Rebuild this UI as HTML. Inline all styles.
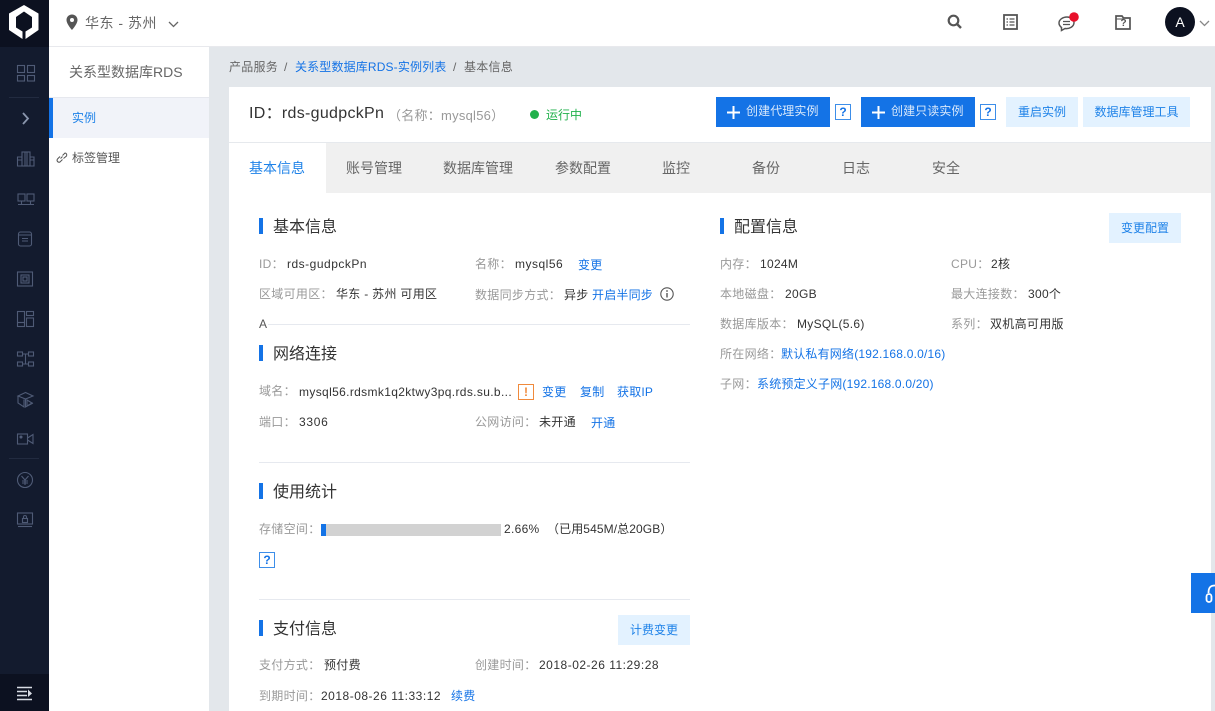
<!DOCTYPE html>
<html lang="zh"><head><meta charset="utf-8"><title>RDS</title>
<style>
html,body{margin:0;padding:0;width:1215px;height:711px;overflow:hidden;background:#e3e7eb;font-family:"Liberation Sans","Noto Sans CJK SC",sans-serif;font-size:12px;color:#333}
.a,.t,.l,.v,.k,.h,.b{position:absolute;white-space:nowrap}
.t{line-height:20px}
.l{color:#999;line-height:20px;font-size:12px;letter-spacing:.3px}
.v{color:#333;line-height:20px;font-size:12px;letter-spacing:.3px}
.n{letter-spacing:.5px}
.k{color:#1473e6;line-height:20px;font-size:12px;letter-spacing:.2px}
.h{font-size:16px;line-height:22px;color:#333}
.h:before{content:"";position:absolute;left:-14px;top:1px;width:4px;height:16px;background:#1473e6}
.b{background:#e3f2ff;color:#1e82e8;text-align:center;height:30px;line-height:30px;font-size:12px}
.p{background:#1473e6;color:#d8e8fb;height:30px;line-height:29px;top:97px;font-size:12px;letter-spacing:.1px}
.p svg{position:absolute;left:11px;top:9px}
.p span{position:absolute;left:30px}
.q{position:absolute;width:14px;height:14px;border:1px solid #3d8ee9;background:#fff;color:#1473e6;text-align:center;line-height:14px;font-size:12px;font-weight:bold}
.tab{position:absolute;top:158px;font-size:14px;line-height:20px;color:#666}
.hr{position:absolute;height:1px;background:#e6e9ef}
svg{position:absolute;overflow:visible}
.ic{fill:none;stroke:#4f5b76;stroke-width:1.1}
</style></head><body>
<!-- sidebar -->
<div class="a" style="left:0;top:0;width:49px;height:711px;background:#131b2e"></div>
<div class="a" style="left:0;top:0;width:49px;height:47px;background:#0c1120"></div>
<div class="a" style="left:0;top:674px;width:49px;height:37px;background:#0c1120"></div>
<div class="a" style="left:9px;top:97px;width:30px;height:1px;background:#222b40"></div>
<div class="a" style="left:9px;top:458px;width:30px;height:1px;background:#222b40"></div>
<svg style="left:0;top:0" width="49" height="47"><path d="M24 5L38.500 13.500V30L25.500 39V31.500L32 27.500V17L24 11.500L16 17V27.500L22.500 31.500V39L9 30V13.500Z" fill="#fff"/></svg>
<svg class="ic" style="left:0;top:0" width="49" height="540">
<g><rect x="17.500" y="65.500" width="7" height="7"/><rect x="27.500" y="65.500" width="7" height="7"/><rect x="17.500" y="75.500" width="7" height="5.500"/><rect x="27.500" y="75.500" width="7" height="5.500"/></g>
<path d="M23 113L28 118.500L23 124" stroke="#8a96ad" stroke-width="1.800"/>
<g><rect x="22" y="152" width="8" height="14"/><path d="M22 157H17.500V166H34V157H30M25 152V166M27 152V166M17.500 160H22M30 160H34"/></g>
<g><rect x="18" y="194" width="7" height="7"/><rect x="27" y="194" width="7" height="7"/><path d="M18 204.500H34M21.500 201V204.500M30.500 201V204.500"/></g>
<g><rect x="18.500" y="232" width="13" height="14" rx="2"/><path d="M18.500 235H31.500M22 238.500H28M22 241H28"/></g>
<g><rect x="17.500" y="272" width="15" height="14"/><rect x="21" y="275" width="8" height="8"/><rect x="23" y="277" width="4" height="4"/></g>
<g><rect x="17.500" y="311.500" width="7" height="11"/><rect x="26.500" y="311.500" width="7" height="4"/><rect x="17.500" y="322.500" width="7" height="4"/><rect x="26.500" y="318" width="7" height="8.500"/></g>
<g><rect x="17.500" y="352" width="5" height="4"/><rect x="28.500" y="352" width="5" height="4"/><rect x="17.500" y="362" width="5" height="4"/><rect x="28.500" y="362" width="5" height="4"/><path d="M22.500 354H28.500M22.500 364H28.500M25.500 354V364"/></g>
<g><path d="M18 396L25.500 392.500L33 396L25.500 399ZM18 396V403L24 407V399.500M25.500 399V407L33 403M27 400V406L32 403Z"/></g>
<g><rect x="17.500" y="434" width="10" height="10"/><path d="M27.500 438L33 434.500V443.500L27.500 440"/><circle cx="21" cy="437" r="1" fill="#5c6a85"/></g>
<g><circle cx="25" cy="480" r="7.500"/><path d="M21.500 476L25 480L28.500 476M25 480V485M22 481H28M22 483H28"/></g>
<g><rect x="17.500" y="513" width="15" height="11"/><path d="M18 526.500H32"/><rect x="22.500" y="518.500" width="5" height="4"/><path d="M23.500 518.500V517A1.500 1.500 0 0 1 26.500 517V518.500"/></g>
</svg>
<svg style="left:0;top:674" width="49" height="37"><path d="M17 13.500H32M17 17.500H27M17 21.500H27M17 25.500H32" stroke="#d8dce4" stroke-width="1.600"/><path d="M28 15.500L32 19.500L28 23Z" fill="#d8dce4"/></svg>
<!-- topbar -->
<div class="a" style="left:49px;top:0;width:1166px;height:47px;background:#fff;border-bottom:1px solid #e8e9ed;box-sizing:border-box"></div>
<svg style="left:66px;top:14px" width="13" height="17"><path d="M6 0.500C2.700 0.500 0.500 3 0.500 6C0.500 10 6 16 6 16S11.500 10 11.500 6C11.500 3 9.300 0.500 6 0.500ZM6 8A2 2 0 1 1 6 4A2 2 0 0 1 6 8Z" fill="#555" fill-rule="evenodd"/></svg>
<div class="t" style="left:85px;top:13px;font-size:14px;color:#666;letter-spacing:.5px">华东 - 苏州</div>
<svg style="left:168px;top:21px" width="11" height="7"><path d="M1 1L5.500 5.500L10 1" fill="none" stroke="#666" stroke-width="1.300"/></svg>
<svg style="left:947px;top:14px" width="15" height="15"><circle cx="6.500" cy="6.500" r="4.800" fill="none" stroke="#555" stroke-width="2.200"/><path d="M10 10L14 14" stroke="#555" stroke-width="2.400"/></svg>
<svg style="left:1003px;top:14px" width="15" height="16"><rect x="1" y="1" width="13" height="14" fill="none" stroke="#555" stroke-width="1.800"/><path d="M3.500 5H5M6.500 5H11.500M3.500 8H5M6.500 8H11.500M3.500 11H5M6.500 11H11.500" stroke="#555" stroke-width="1.200"/></svg>
<svg style="left:1058px;top:12px" width="24" height="20"><path d="M9 5C5 5 1 7.500 1 11C1 13 2.200 14.500 3.500 15.500L3.500 18.500L7 16.500C11 17 16 15 16 10.500C16 7 13 5 9 5Z" fill="none" stroke="#555" stroke-width="1.500"/><path d="M5 9.500H12M5 12.500H12" stroke="#555" stroke-width="1.200"/><circle cx="16" cy="5" r="4.800" fill="#e8102b"/></svg>
<svg style="left:1115px;top:14px" width="16" height="16"><path d="M1 15V2H7L8.500 4H15V15Z" fill="none" stroke="#555" stroke-width="1.700"/><path d="M1 5H8.500" stroke="#555" stroke-width="1"/></svg>
<div class="a" style="left:1119px;top:18px;width:9px;font-size:10px;line-height:12px;color:#555;font-weight:bold;text-align:center">?</div>
<div class="a" style="left:1165px;top:7px;width:30px;height:30px;border-radius:50%;background:#0c1120;color:#fff;font-size:14px;line-height:30px;text-align:center">A</div>
<svg style="left:1199px;top:20px" width="11" height="7"><path d="M1 1L5.500 5.500L10 1" fill="none" stroke="#888" stroke-width="1.300"/></svg>
<!-- left panel -->
<div class="a" style="left:49px;top:47px;width:160px;height:664px;background:#fff"></div>
<div class="t" style="left:69px;top:62px;font-size:14px;color:#666">关系型数据库RDS</div>
<div class="a" style="left:49px;top:97px;width:160px;height:1px;background:#e6e8ee"></div>
<div class="a" style="left:49px;top:98px;width:160px;height:40px;background:#f1f3f9"></div>
<div class="a" style="left:49px;top:98px;width:4px;height:40px;background:#1473e6"></div>
<div class="t" style="left:72px;top:108px;color:#1e82e8">实例</div>
<svg style="left:55px;top:151px" width="13" height="13" fill="none" stroke="#555" stroke-width="1"><path d="M5.500 7.500L7.500 5.500M5 5.500L2.500 8A2 2 0 0 0 5 11L7.500 8.500M7.500 4.500L10 2A2 2 0 0 1 11.500 5L8.500 7.500"/></svg>
<div class="t" style="left:72px;top:148px;color:#555">标签管理</div>
<!-- breadcrumb -->
<div class="t" style="left:229px;top:57px;color:#666;letter-spacing:.25px">产品服务</div>
<div class="t" style="left:284px;top:57px;color:#666">/</div>
<div class="t" style="left:295px;top:57px;color:#1473e6;letter-spacing:.15px">关系型数据库RDS-实例列表</div>
<div class="t" style="left:453px;top:57px;color:#666">/</div>
<div class="t" style="left:464px;top:57px;color:#666;letter-spacing:.25px">基本信息</div>
<!-- card -->
<div class="a" style="left:229px;top:87px;width:982px;height:624px;background:#fff"></div>
<div class="a" style="left:229px;top:142px;width:982px;height:1px;background:#e6e9ed"></div>
<div class="a" style="left:229px;top:143px;width:982px;height:50px;background:#f0f0f0"></div>
<div class="a" style="left:229px;top:143px;width:97px;height:50px;background:#fff"></div>
<div class="t" style="left:249px;top:104px;font-size:16px;color:#333;letter-spacing:.3px">ID：rds-gudpckPn</div>
<div class="t" style="left:388px;top:106px;font-size:13px;color:#999;letter-spacing:.25px">（名称：mysql56）</div>
<div class="a" style="left:530px;top:110px;width:9px;height:9px;border-radius:50%;background:#22b14c"></div>
<div class="t" style="left:546px;top:105px;color:#22b14c">运行中</div>
<div class="a p" style="left:716px;width:114px"><svg width="14" height="14"><path d="M6.500 0V13M0 6.500H13" stroke="#fff" stroke-width="2"/></svg><span>创建代理实例</span></div>
<div class="q" style="left:835px;top:104px">?</div>
<div class="a p" style="left:861px;width:114px"><svg width="14" height="14"><path d="M6.500 0V13M0 6.500H13" stroke="#fff" stroke-width="2"/></svg><span>创建只读实例</span></div>
<div class="q" style="left:980px;top:104px">?</div>
<div class="b" style="left:1006px;top:97px;width:72px">重启实例</div>
<div class="b" style="left:1083px;top:97px;width:107px">数据库管理工具</div>
<!-- tabs -->
<div class="tab" style="left:249px;color:#1e82e8">基本信息</div>
<div class="tab" style="left:346px">账号管理</div>
<div class="tab" style="left:443px">数据库管理</div>
<div class="tab" style="left:555px">参数配置</div>
<div class="tab" style="left:662px">监控</div>
<div class="tab" style="left:752px">备份</div>
<div class="tab" style="left:842px">日志</div>
<div class="tab" style="left:932px">安全</div>
<!-- basic -->
<div class="h" style="left:273px;top:217px">基本信息</div>
<div class="l" style="left:259px;top:254px">ID：</div><div class="v n" style="left:287px;top:254px">rds-gudpckPn</div>
<div class="l" style="left:475px;top:254px">名称：</div><div class="v n" style="left:515px;top:254px">mysql56</div><div class="k" style="left:578px;top:255px">变更</div>
<div class="l" style="left:259px;top:284px">区域可用区：</div><div class="v" style="left:336px;top:284px">华东 - 苏州 可用区</div>
<div class="l" style="left:475px;top:285px">数据同步方式：</div><div class="v" style="left:564px;top:285px">异步</div><div class="k" style="left:592px;top:285px">开启半同步</div>
<svg style="left:660px;top:287px" width="14" height="14"><circle cx="7" cy="7" r="6.200" fill="none" stroke="#555" stroke-width="1.100"/><path d="M7 6V10.500" stroke="#555" stroke-width="1.400"/><circle cx="7" cy="4" r=".9" fill="#555"/></svg>
<div class="t" style="left:259px;top:314px;color:#555">A</div>
<div class="hr" style="left:268px;top:324px;width:422px"></div>
<!-- net -->
<div class="h" style="left:273px;top:344px">网络连接</div>
<div class="l" style="left:259px;top:381px">域名：</div><div class="v" style="left:299px;top:382px;letter-spacing:.35px">mysql56.rdsmk1q2ktwy3pq.rds.su.b...</div>
<div class="a" style="left:518px;top:384px;width:14px;height:14px;border:1px solid #f08a3c;color:#f08a3c;font-size:12px;font-weight:bold;line-height:14px;text-align:center">!</div>
<div class="k" style="left:542px;top:382px">变更</div><div class="k" style="left:580px;top:382px">复制</div><div class="k" style="left:617px;top:382px">获取IP</div>
<div class="l" style="left:259px;top:412px">端口：</div><div class="v" style="left:299px;top:412px;letter-spacing:.7px">3306</div>
<div class="l" style="left:475px;top:412px">公网访问：</div><div class="v" style="left:539px;top:412px">未开通</div><div class="k" style="left:591px;top:413px">开通</div>
<div class="hr" style="left:259px;top:462px;width:431px"></div>
<!-- usage -->
<div class="h" style="left:273px;top:482px">使用统计</div>
<div class="l" style="left:259px;top:519px">存储空间：</div>
<div class="a" style="left:321px;top:524px;width:180px;height:12px;background:#d2d2d2"></div>
<div class="a" style="left:321px;top:524px;width:5px;height:12px;background:#1473e6"></div>
<div class="v" style="left:504px;top:519px">2.66%</div><div class="v" style="left:547px;top:519px;letter-spacing:.1px">（已用545M/总20GB）</div>
<div class="q" style="left:259px;top:552px">?</div>
<div class="hr" style="left:259px;top:599px;width:431px"></div>
<!-- pay -->
<div class="h" style="left:273px;top:619px">支付信息</div>
<div class="b" style="left:618px;top:615px;width:72px">计费变更</div>
<div class="l" style="left:259px;top:655px">支付方式：</div><div class="v" style="left:324px;top:655px">预付费</div>
<div class="l" style="left:475px;top:655px">创建时间：</div><div class="v n" style="left:539px;top:655px">2018-02-26 11:29:28</div>
<div class="l" style="left:259px;top:686px">到期时间：</div><div class="v n" style="left:321px;top:686px">2018-08-26 11:33:12</div><div class="k" style="left:451px;top:686px">续费</div>
<!-- config -->
<div class="h" style="left:734px;top:217px">配置信息</div>
<div class="b" style="left:1109px;top:213px;width:72px">变更配置</div>
<div class="l" style="left:720px;top:254px">内存：</div><div class="v" style="left:760px;top:254px">1024M</div>
<div class="l" style="left:951px;top:254px">CPU：</div><div class="v" style="left:991px;top:254px">2核</div>
<div class="l" style="left:720px;top:284px">本地磁盘：</div><div class="v" style="left:785px;top:284px">20GB</div>
<div class="l" style="left:951px;top:284px">最大连接数：</div><div class="v" style="left:1028px;top:284px">300个</div>
<div class="l" style="left:720px;top:314px">数据库版本：</div><div class="v" style="left:797px;top:314px">MySQL(5.6)</div>
<div class="l" style="left:951px;top:314px">系列：</div><div class="v" style="left:990px;top:314px">双机高可用版</div>
<div class="l" style="left:720px;top:344px">所在网络：</div><div class="k" style="left:781px;top:344px">默认私有网络(192.168.0.0/16)</div>
<div class="l" style="left:720px;top:374px">子网：</div><div class="k" style="left:757px;top:374px">系统预定义子网(192.168.0.0/20)</div>
<!-- float -->
<div class="a" style="left:1191px;top:573px;width:24px;height:40px;background:#1473e6"></div>
<svg style="left:1191px;top:573px" width="24" height="40"><path d="M24 12.500C19 12.500 17.500 15 17.500 20" fill="none" stroke="#fff" stroke-width="1.800"/><rect x="15.500" y="21" width="5" height="8" rx="2.500" fill="none" stroke="#fff" stroke-width="1.800"/></svg>
</body></html>
